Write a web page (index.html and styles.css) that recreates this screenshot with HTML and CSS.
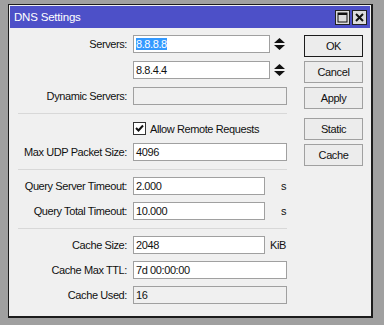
FILE: index.html
```html
<!DOCTYPE html>
<html lang="en">
<head>
    <meta charset="UTF-8">
    <title>DNS Settings</title>
    <link rel="stylesheet" href="styles.css">
</head>
<body>
    <div class="window">
        <div class="titlebar">
            <span class="title">DNS Settings</span>
            <div class="tb-buttons">
                <span class="tb-btn">
                    <svg width="11" height="11" viewBox="0 0 11 11"><rect x="1" y="1" width="9" height="9" fill="none" stroke="#111" stroke-width="1"/><rect x="1" y="1" width="9" height="2" fill="#111"/></svg>
                </span>
                <span class="tb-btn">
                    <svg width="11" height="11" viewBox="0 0 11 11"><path d="M2 2 L9 9 M9 2 L2 9" stroke="#111" stroke-width="2"/></svg>
                </span>
            </div>
        </div>

        <div class="content">
            <div class="form">
                <div class="row">
                    <span class="label">Servers:</span>
                    <div class="cell">
                        <div class="field short"><span class="sel">8.8.8.8</span></div>
                        <svg class="spin" width="11" height="12" viewBox="0 0 11 12"><path d="M0 5 L5.5 0 L11 5 Z M0 7 L11 7 L5.5 12 Z" fill="#111"/></svg>
                    </div>
                </div>
                <div class="row">
                    <span class="label"></span>
                    <div class="cell">
                        <div class="field short">8.8.4.4</div>
                        <svg class="spin" width="11" height="12" viewBox="0 0 11 12"><path d="M0 5 L5.5 0 L11 5 Z M0 7 L11 7 L5.5 12 Z" fill="#111"/></svg>
                    </div>
                </div>
                <div class="row">
                    <span class="label">Dynamic Servers:</span>
                    <div class="cell"><div class="field disabled"></div></div>
                </div>

                <div class="sep sep-1"></div>

                <div class="row check-row">
                    <span class="label"></span>
                    <div class="cell">
                        <span class="checkbox">
                            <svg width="11" height="11" viewBox="0 0 11 11"><path d="M2 5 L4.5 7.5 L9 2.5" fill="none" stroke="#111" stroke-width="2"/></svg>
                        </span>
                        <span class="check-text">Allow Remote Requests</span>
                    </div>
                </div>
                <div class="row">
                    <span class="label">Max UDP Packet Size:</span>
                    <div class="cell"><div class="field">4096</div></div>
                </div>

                <div class="sep sep-2"></div>

                <div class="row">
                    <span class="label">Query Server Timeout:</span>
                    <div class="cell">
                        <div class="field mid">2.000</div>
                        <span class="unit">s</span>
                    </div>
                </div>
                <div class="row">
                    <span class="label">Query Total Timeout:</span>
                    <div class="cell">
                        <div class="field mid">10.000</div>
                        <span class="unit">s</span>
                    </div>
                </div>

                <div class="sep sep-3"></div>

                <div class="row">
                    <span class="label">Cache Size:</span>
                    <div class="cell">
                        <div class="field mid">2048</div>
                        <span class="unit">KiB</span>
                    </div>
                </div>
                <div class="row">
                    <span class="label">Cache Max TTL:</span>
                    <div class="cell"><div class="field">7d 00:00:00</div></div>
                </div>
                <div class="row">
                    <span class="label">Cache Used:</span>
                    <div class="cell"><div class="field disabled">16</div></div>
                </div>
            </div>

            <div class="buttons">
                <button class="btn default">OK</button>
                <button class="btn">Cancel</button>
                <button class="btn">Apply</button>
                <button class="btn group">Static</button>
                <button class="btn">Cache</button>
            </div>
        </div>
    </div>
</body>
</html>
```

FILE: styles.css
```css
body {
    margin: 0;
    padding: 4px 0 0 8px;
    background-color: #a0a0a0;
    font-family: "Liberation Sans", Arial, sans-serif;
    font-size: 11px;
    letter-spacing: -0.4px;
    color: #111;
}

.window {
    width: 360px;
    padding: 1px;
    border: 1px solid #1c1c1c;
    border-right-width: 2px;
    border-bottom-width: 2px;
    background-color: #f0f0f0;
}

.titlebar {
    display: flex;
    align-items: center;
    height: 22px;
    padding: 0 3px 0 4px;
    background-color: #4d50c8;
    color: #fff;
}

.title {
    flex: 1;
    font-size: 11.5px;
    letter-spacing: -0.2px;
}

.tb-buttons {
    display: flex;
    gap: 2px;
}

.tb-btn {
    display: flex;
    align-items: center;
    justify-content: center;
    width: 13px;
    height: 13px;
    border: 1px solid #222;
    background-color: #dcdcdc;
}

.content {
    display: flex;
    height: 280px;
    padding: 7px 7px 0 8px;
}

.form {
    width: 269px;
}

.row {
    display: grid;
    grid-template-columns: 109px 154px;
    column-gap: 6px;
    align-items: center;
    height: 18px;
    margin-bottom: 8px;
}

.label {
    text-align: right;
    white-space: nowrap;
}

.cell {
    display: flex;
    align-items: center;
    height: 18px;
}

.field {
    box-sizing: border-box;
    width: 154px;
    height: 18px;
    padding: 0 2px;
    border: 1px solid #a0a0a0;
    background-color: #fff;
    line-height: 16px;
    white-space: nowrap;
}

.field.short {
    width: 137px;
}

.field.mid {
    width: 132px;
}

.field.disabled {
    background-color: #f0f0f0;
}

.sel {
    background-color: #3399ff;
    color: #fff;
}

.spin {
    margin-left: 4px;
}

.unit {
    flex: 1;
    text-align: right;
    padding-right: 1px;
}

.sep {
    height: 1px;
    background-color: #d8d8d8;
}

.sep-1 {
    margin: 0 0 8px;
}

.sep-2 {
    margin: 8px 0 7px;
}

.sep-3 {
    margin: 8px 0 7px;
}

.check-row,
.check-row .cell {
    height: 13px;
}

.checkbox {
    display: flex;
    align-items: center;
    justify-content: center;
    box-sizing: border-box;
    width: 13px;
    height: 13px;
    border: 1px solid #333;
    background-color: #fff;
}

.check-text {
    margin-left: 4px;
}

.sep-2 + .row,
.sep-3 ~ .row {
    margin-bottom: 7px;
}

.buttons {
    display: flex;
    flex-direction: column;
    gap: 4px;
    width: 59px;
    margin-left: 17px;
}

.btn {
    height: 22px;
    padding: 0;
    border: 1px solid #a0a0a0;
    background-color: #ececec;
    font-family: inherit;
    font-size: 11px;
    letter-spacing: -0.4px;
    color: #111;
}

.btn.default {
    border-color: #1c1c1c;
}

.btn.group {
    margin-top: 5px;
}
```
